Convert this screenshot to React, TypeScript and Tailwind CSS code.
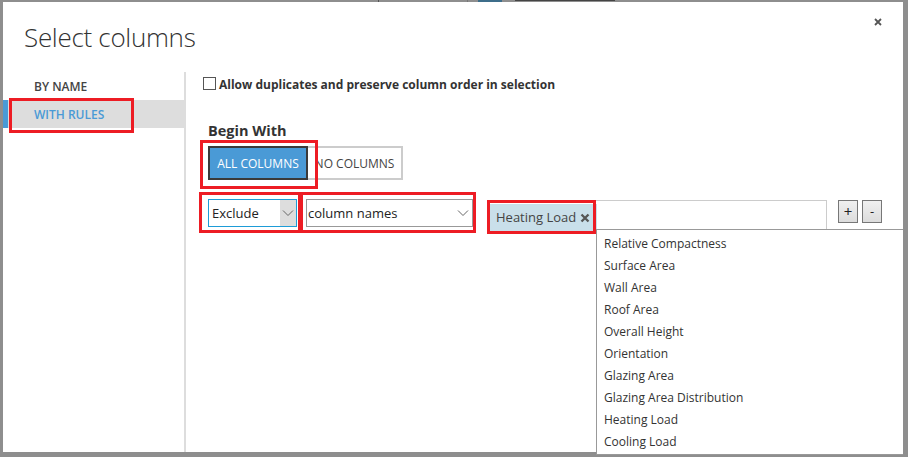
import React from "react";

const items = [
  "Relative Compactness",
  "Surface Area",
  "Wall Area",
  "Roof Area",
  "Overall Height",
  "Orientation",
  "Glazing Area",
  "Glazing Area Distribution",
  "Heating Load",
  "Cooling Load",
];

function Chevron({ className }: { className?: string }) {
  return (
    <svg width="12" height="8" viewBox="0 0 12 8" className={className}>
      <path d="M1 1.5 L6 6.5 L11 1.5" fill="none" stroke="#666" strokeWidth="1" />
    </svg>
  );
}

function RedBox({ className }: { className: string }) {
  return <div className={"pointer-events-none absolute border-[3px] border-[#ed1c24] " + className} />;
}

export default function App() {
  return (
    <div
      className="relative h-[457px] w-[908px] overflow-hidden bg-[#8e8e8e] pl-[3px] pr-[5px] pt-[2px] pb-[5px]"
      style={{ fontFamily: '"Open Sans", "Noto Sans", sans-serif' }}
    >
      {/* background bits at top */}
      <div className="absolute left-[378px] top-0 h-[2px] w-[1px] bg-[#555]" />
      <div className="absolute left-[467px] top-0 h-[2px] w-[1px] bg-[#777]" />
      <div className="absolute left-[478px] top-0 h-[2px] w-[24px] bg-[#3d6d8a]" />
      <div className="absolute left-[515px] top-0 h-[1px] w-[100px] bg-[#444]" />

      <div className="relative flex h-full w-full flex-col bg-white">
        {/* header */}
        <div className="relative h-[70px] shrink-0 pl-[21px]">
          <div className="pt-[17px] text-[26px] font-light leading-[36px] tracking-[-0.3px] text-[#333]">
            Select columns
          </div>
          <svg width="8" height="8" viewBox="0 0 8 8" className="absolute right-[21px] top-[16px]">
            <path d="M1 1 L7 7 M7 1 L1 7" stroke="#555" strokeWidth="1.8" />
          </svg>
        </div>

        <div className="flex min-h-0 flex-1">
          {/* left nav */}
          <div className="w-[181px] shrink-0">
            <div className="flex h-[28px] items-center border-l-[5px] border-transparent pl-[26px] pt-[1px] text-[12px] font-semibold text-[#444]">
              BY NAME
            </div>
            <div className="relative flex h-[28px] items-center border-l-[5px] border-[#4a9ad6] bg-[#dddddd] pl-[26px] pt-[1px] text-[12px] font-semibold text-[#4a9ad6]">
              WITH RULES
              <RedBox className="left-[1px] top-[-2px] h-[35px] w-[125px]" />
            </div>
          </div>
          <div className="w-[2px] shrink-0 bg-[#dddddd]" />

          {/* right pane */}
          <div className="relative min-w-0 flex-1">
            <div className="ml-[17px] mt-[5px] flex h-[13px] items-center gap-[3px]">
              <div className="h-[13px] w-[13px] border border-[#555] bg-white" />
              <span className="relative top-[1px] text-[12px] font-bold leading-[13px] text-[#333]">
                Allow duplicates and preserve column order in selection
              </span>
            </div>

            <div className="ml-[22px] mt-[31px] h-[20px] text-[14.5px] font-bold leading-[20px] text-[#333]">
              Begin With
            </div>

            <div className="ml-[22px] mt-[5px] flex h-[34px]">
              <div className="relative flex w-[100px] items-center justify-center border-2 border-[#3a3a3a] bg-[#4a9ad6] pt-[1px] text-[12px] text-white">
                ALL COLUMNS
                <RedBox className="-left-[10px] -top-[8px] h-[49px] w-[118px] border-4" />
              </div>
              <div className="flex w-[95px] items-center justify-center border-2 border-l-0 border-[#cccccc] pt-[1px] text-[12px] text-[#444]">
                NO COLUMNS
              </div>
            </div>

            <div className="ml-[22px] mt-[19px] flex items-start">
              <div className="relative flex h-[28px] w-[89px] items-center border border-[#1e9cd7] bg-white">
                <span className="flex-1 pl-[3px] pt-[1px] text-[13px] text-[#222]">Exclude</span>
                <div className="flex h-full w-[16px] items-center justify-center bg-[#dddddd]">
                  <Chevron />
                </div>
                <RedBox className="-left-[10px] -top-[8px] h-[41px] w-[104px] border-4" />
              </div>
              <div className="relative ml-[9px] flex h-[28px] w-[167px] items-center border border-[#999] bg-white">
                <span className="flex-1 pl-[1px] pt-[1px] text-[13px] text-[#222]">column names</span>
                <Chevron className="mr-[3px]" />
                <RedBox className="-left-[9px] -top-[8px] h-[41px] w-[178px] border-4" />
              </div>
              <div className="relative ml-[14px] mt-[1px] flex h-[34px] w-[340px] items-center border border-[#cccccc] bg-white px-[2px]">
                <div className="relative flex h-[27px] items-center gap-[4px] bg-[#c9dfea] pl-[6px] pr-[7px] pt-[1px] text-[13px] text-[#444]">
                  Heating Load
                  <svg width="10" height="10" viewBox="0 0 10 10">
                    <path d="M1.5 1.5 L8.5 8.5 M8.5 1.5 L1.5 8.5" stroke="#555" strokeWidth="2.3" />
                  </svg>
                  <RedBox className="-left-[3px] -top-[4px] h-[34px] w-[109px]" />
                </div>
              </div>
              <div className="ml-[11px] mt-[1px] flex h-[23px] w-[20px] items-center justify-center border border-[#777] bg-gradient-to-b from-[#f0f0f0] to-[#dcdcdc] text-[15px] leading-none text-[#222]">
                +
              </div>
              <div className="ml-[4px] mt-[1px] flex h-[23px] w-[20px] items-center justify-center border border-[#777] bg-gradient-to-b from-[#f0f0f0] to-[#dcdcdc] text-[13px] leading-none text-[#222]">
                -
              </div>
            </div>
          </div>
        </div>

        {/* dropdown list */}
        <div className="absolute left-[593px] top-[227px] h-[226px] w-[307px] border border-[#999] border-r-0 bg-white pt-[3px]">
          {items.map((t) => (
            <div key={t} className="flex h-[22px] items-center pl-[7px] text-[12px] text-[#333]">
              {t}
            </div>
          ))}
        </div>
      </div>
    </div>
  );
}
